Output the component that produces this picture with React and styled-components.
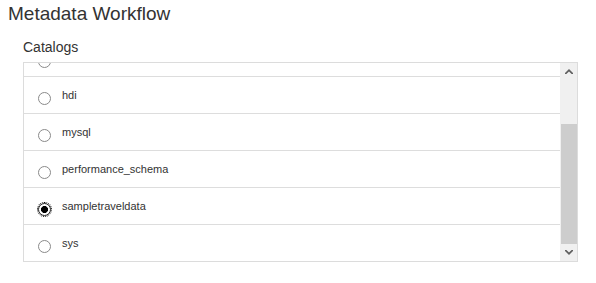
import { useLayoutEffect, useRef, useState } from 'react';
import styled, { createGlobalStyle } from 'styled-components';

const GlobalStyle = createGlobalStyle`
  body {
    margin: 0;
    background: #fff;
    font-family: "Liberation Sans", Arial, sans-serif;
    color: #333;
  }
`;

const Page = styled.div`
  padding: 3px 8px 0 8px;
`;

const Title = styled.h1`
  margin: 0;
  font-size: 19px;
  line-height: 22px;
  font-weight: normal;
  color: #333;
`;

const Section = styled.section`
  margin-top: 14px;
  padding-left: 15px;
  width: 555px;
`;

const SectionLabel = styled.h2`
  margin: 0 0 7px 0;
  font-size: 14px;
  line-height: 16px;
  font-weight: normal;
  color: #333;
`;

const ListBox = styled.div`
  display: flex;
  height: 198px;
  border: 1px solid #dcdcdc;
`;

const Viewport = styled.div`
  flex: 1;
  overflow: hidden;
`;

const Row = styled.label`
  display: flex;
  align-items: flex-start;
  gap: 11px;
  padding: 12px 0 0 14px;
  box-sizing: border-box;
  height: ${({ $first }) => ($first ? '36px' : '37px')};
  border-top: ${({ $first }) => ($first ? 'none' : '1px solid #dddddd')};
  cursor: pointer;
`;

const Radio = styled.input.attrs({ type: 'radio' })`
  appearance: none;
  margin: 3px 0 0 0;
  width: 13px;
  height: 13px;
  flex-shrink: 0;
  border: 1px solid #8a8a8a;
  border-radius: 50%;
  background: #fff;
  box-sizing: border-box;

  &:checked {
    border-color: #222;
    background: radial-gradient(circle, #000 0 3.2px, #fff 3.8px);
    outline: 1px dotted #000;
    outline-offset: 0;
  }
`;

const ItemName = styled.span`
  font-size: 11px;
  line-height: 13px;
  color: #333;
`;

const Scrollbar = styled.div`
  width: 17px;
  display: flex;
  flex-direction: column;
  background: #f0f0f0;
`;

const ArrowButton = styled.div`
  height: 17px;
  display: flex;
  align-items: center;
  justify-content: center;
  color: #606060;
`;

const Track = styled.div`
  flex: 1;
  display: flex;
  flex-direction: column;
  justify-content: flex-end;
`;

const Thumb = styled.div`
  height: 120px;
  margin-left: 1px;
  background: #cdcdcd;
`;

const Chevron = ({ down }) => (
  <svg width="8" height="5" viewBox="0 0 8 5" style={{ transform: down ? 'rotate(180deg)' : 'none' }}>
    <path d="M0 4 L4 0 L8 4 L8 5 L6.6 5 L4 2.4 L1.4 5 L0 5 Z" fill="currentColor" />
  </svg>
);

const catalogs = ['default', 'hdi', 'mysql', 'performance_schema', 'sampletraveldata', 'sys'];

export default function App() {
  const [selected, setSelected] = useState('sampletraveldata');
  const viewRef = useRef(null);

  useLayoutEffect(() => {
    const el = viewRef.current;
    if (el) el.scrollTop = el.scrollHeight;
  }, []);

  return (
    <>
      <GlobalStyle />
      <Page>
        <Title>Metadata Workflow</Title>
        <Section>
          <SectionLabel>Catalogs</SectionLabel>
          <ListBox>
            <Viewport ref={viewRef}>
              {catalogs.map((name, i) => (
                <Row key={name} $first={i === 0}>
                  <Radio
                    name="catalog"
                    checked={selected === name}
                    onChange={() => setSelected(name)}
                  />
                  <ItemName>{name}</ItemName>
                </Row>
              ))}
            </Viewport>
            <Scrollbar>
              <ArrowButton><Chevron /></ArrowButton>
              <Track><Thumb /></Track>
              <ArrowButton><Chevron down /></ArrowButton>
            </Scrollbar>
          </ListBox>
        </Section>
      </Page>
    </>
  );
}
